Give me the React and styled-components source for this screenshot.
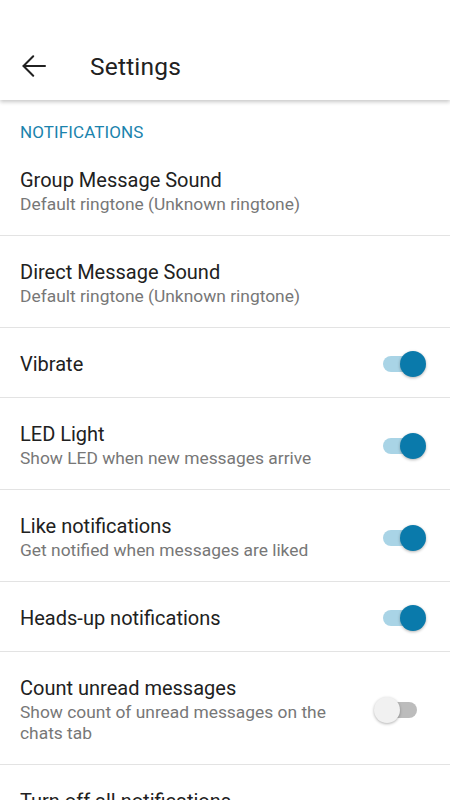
import React from "react";
import styled, { createGlobalStyle } from "styled-components";

const Global = createGlobalStyle`
  html, body { margin: 0; padding: 0; background: #fff; }
  body { font-family: Roboto, "Noto Sans", Arial, sans-serif; -webkit-font-smoothing: antialiased; }
  * { box-sizing: border-box; }
`;

const Page = styled.div`
  width: 450px;
  height: 800px;
  overflow: hidden;
  background: #fff;
  display: flex;
  flex-direction: column;
`;

const Header = styled.header`
  height: 100px;
  flex-shrink: 0;
  display: flex;
  align-items: center;
  padding: 32px 0 0 22px;
  background: #fff;
  box-shadow: 0 2px 4px rgba(0, 0, 0, 0.22);
  position: relative;
  z-index: 1;
`;

const BackButton = styled.button`
  border: 0;
  background: none;
  padding: 0;
  width: 24px;
  height: 22px;
  display: flex;
  align-items: center;
  justify-content: center;
  color: #212121;
`;

const Title = styled.h1`
  margin: 0 0 0 44px;
  font-size: 24.5px;
  font-weight: 400;
  color: #212121;
  letter-spacing: 0.2px;
`;

const List = styled.div`
  display: flex;
  flex-direction: column;
`;

const SectionHeader = styled.div`
  padding: 22px 20px 2px;
  font-size: 17px;
  line-height: 20px;
  color: #1b83ad;
  letter-spacing: 0.1px;
`;

const Row = styled.div`
  display: flex;
  align-items: center;
  padding: 24px 24px ${(p) => (p.$single ? "21px" : "20px")} 20px;
  border-top: ${(p) => (p.$first ? "0" : "1px solid #e3e3e3")};
`;

const Texts = styled.div`
  flex: 1;
  min-width: 0;
  padding-right: 34px;
`;

const RowTitle = styled.div`
  font-size: 20px;
  line-height: 24px;
  color: #212121;
`;

const RowSub = styled.div`
  margin-top: 2px;
  font-size: 17.4px;
  line-height: 21px;
  color: #777777;
`;

const SwitchWrap = styled.div`
  position: relative;
  width: 52px;
  height: 26px;
  flex-shrink: 0;
  margin: -1px 0 -1px;
`;

const Track = styled.div`
  position: absolute;
  left: 9px;
  top: 5px;
  width: 34px;
  height: 16px;
  border-radius: 8px;
  background: ${(p) => (p.$on ? "#a9d4e6" : "#bcbcbc")};
`;

const Thumb = styled.div`
  position: absolute;
  top: 0;
  left: ${(p) => (p.$on ? "26px" : "0")};
  width: 26px;
  height: 26px;
  border-radius: 50%;
  background: ${(p) => (p.$on ? "#0a7aab" : "#f1f1f1")};
  box-shadow: 0 1px 3px rgba(0, 0, 0, 0.3);
`;

function Switch({ on }) {
  return (
    <SwitchWrap>
      <Track $on={on} />
      <Thumb $on={on} />
    </SwitchWrap>
  );
}

const items = [
  { title: "Group Message Sound", sub: "Default ringtone (Unknown ringtone)" },
  { title: "Direct Message Sound", sub: "Default ringtone (Unknown ringtone)" },
  { title: "Vibrate", sw: true },
  { title: "LED Light", sub: "Show LED when new messages arrive", sw: true },
  { title: "Like notifications", sub: "Get notified when messages are liked", sw: true },
  { title: "Heads-up notifications", sw: true },
  { title: "Count unread messages", sub: "Show count of unread messages on the chats tab", sw: false },
  { title: "Turn off all notifications", sub: "" },
];

export default function App() {
  return (
    <Page>
      <Global />
      <Header>
        <BackButton aria-label="Back">
          <svg width="24" height="22" viewBox="0 0 24 22" fill="none" stroke="currentColor" strokeWidth="2" strokeLinecap="round" strokeLinejoin="round">
            <path d="M23 11H1.6" />
            <path d="M11.2 1.3L1.5 11l9.7 9.7" />
          </svg>
        </BackButton>
        <Title>Settings</Title>
      </Header>
      <List>
        <SectionHeader>NOTIFICATIONS</SectionHeader>
        {items.map((it, i) => {
          const single = !it.sub;
          return (
            <Row key={it.title} $first={i === 0} $single={single}>
              <Texts>
                <RowTitle>{it.title}</RowTitle>
                {it.sub ? <RowSub>{it.sub}</RowSub> : null}
              </Texts>
              {it.sw !== undefined ? <Switch on={it.sw} /> : null}
            </Row>
          );
        })}
      </List>
    </Page>
  );
}
